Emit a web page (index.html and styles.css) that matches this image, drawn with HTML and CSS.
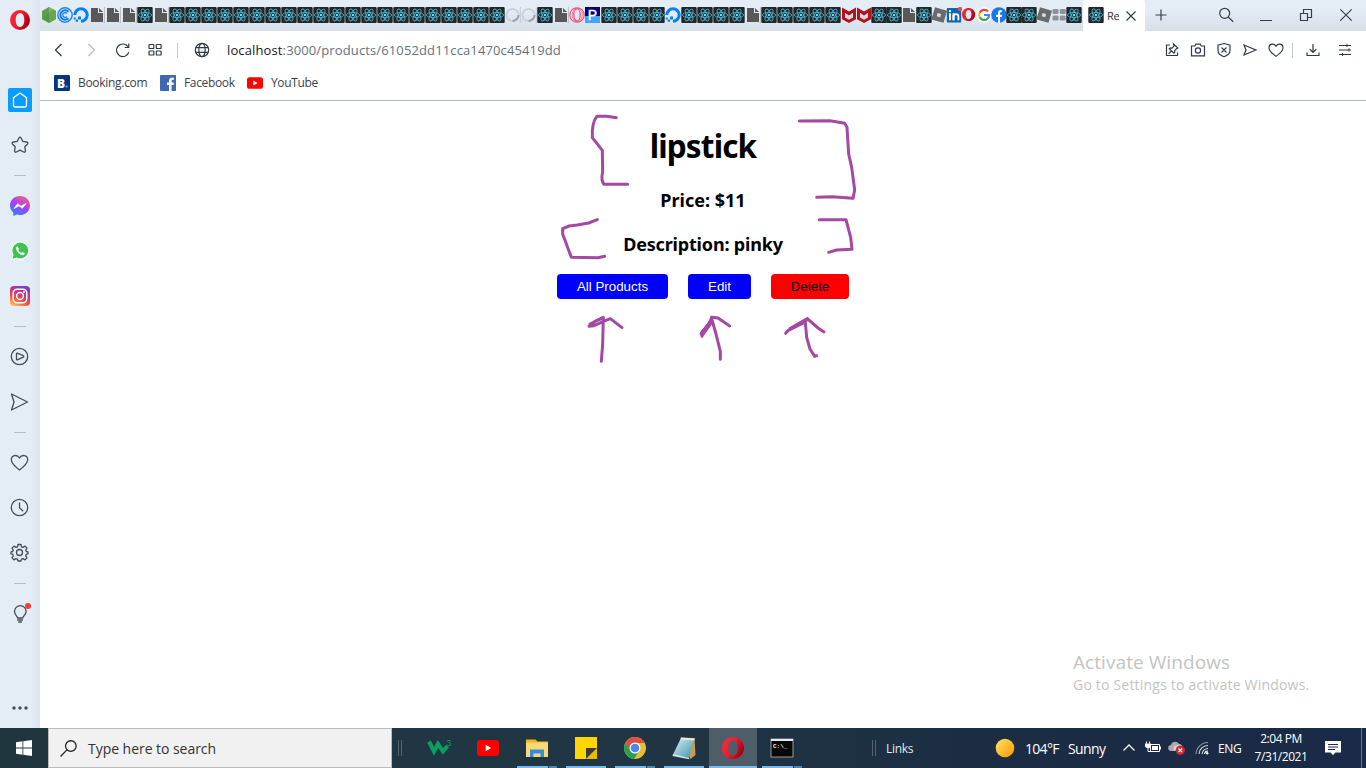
FILE: index.html
```html
<!DOCTYPE html>
<html lang="en">
<head>
<meta charset="utf-8">
<title>React App</title>
<link rel="stylesheet" href="styles.css">
</head>
<body>
<svg class="defs" aria-hidden="true">
  <defs>
    <linearGradient id="gOpera" x1="0" y1="0" x2="1" y2="0.5"><stop offset="0" stop-color="#ff2a3c"/><stop offset="0.55" stop-color="#ee1c2c"/><stop offset="1" stop-color="#a80014"/></linearGradient>
    <linearGradient id="gMsg" x1="0.2" y1="1" x2="0.8" y2="0"><stop offset="0" stop-color="#1f8cff"/><stop offset="0.5" stop-color="#a040ff"/><stop offset="1" stop-color="#ff6070"/></linearGradient>
    <linearGradient id="gInsta" x1="0.2" y1="1" x2="0.7" y2="0"><stop offset="0" stop-color="#fdc04f"/><stop offset="0.35" stop-color="#f0503f"/><stop offset="0.65" stop-color="#c8308a"/><stop offset="1" stop-color="#6a45c8"/></linearGradient>
    <linearGradient id="gSun" x1="0" y1="0" x2="1" y2="1"><stop offset="0" stop-color="#ffe566"/><stop offset="1" stop-color="#ff9500"/></linearGradient>
    <linearGradient id="gNote" x1="0" y1="0" x2="1" y2="1"><stop offset="0" stop-color="#d3eef3"/><stop offset="1" stop-color="#3d94ab"/></linearGradient>
    <symbol id="re" viewBox="0 0 16 16"><rect x="0.3" width="15.4" height="16" rx="1" fill="#20262b"/><g fill="none" stroke="#4badc4" stroke-width="0.9"><ellipse cx="8" cy="8" rx="6.6" ry="2.5"/><ellipse cx="8" cy="8" rx="6.6" ry="2.5" transform="rotate(60 8 8)"/><ellipse cx="8" cy="8" rx="6.6" ry="2.5" transform="rotate(120 8 8)"/></g><circle cx="8" cy="8" r="1.3" fill="#61dafb"/></symbol>
    <symbol id="pg" viewBox="0 0 16 16"><path d="M2 1h7v5h5v9H2z" fill="#585858"/><path d="M10 1l4 4h-4z" fill="#585858"/><path d="M15.4 0v16" stroke="#a9b1b9" stroke-width="0.8"/></symbol>
    <symbol id="nd" viewBox="0 0 16 16"><path d="M8 0l7 4v8l-7 4-7-4V4z" fill="#5d9f4b"/><path d="M8 0l7 4v8l-7 4z" fill="#7fbb62"/><path d="M1 12L12 2l3 2v8l-7 4z" fill="#4e8e43" opacity=".45"/></symbol>
    <symbol id="cc" viewBox="0 0 16 16"><circle cx="8" cy="8" r="7.2" fill="#d8ebff" stroke="#1f82ee" stroke-width="1.4"/><path d="M11.5 4.8a4.7 4.7 0 1 0 0 6.4" fill="none" stroke="#0d7af5" stroke-width="2"/><path d="M10 6.5a2.4 2.4 0 1 0 0 3" fill="none" stroke="#0d7af5" stroke-width="1.2"/></symbol>
    <symbol id="do" viewBox="0 0 16 16"><path d="M1.8 8A6.2 6.2 0 1 1 8 14.2" fill="none" stroke="#0080ff" stroke-width="3"/><path d="M5 9.5h3v3H5zM2.7 12.5H5v2.3H2.7zM.7 10.6h2v2h-2z" fill="#0080ff"/></symbol>
    <symbol id="sp" viewBox="0 0 16 16"><circle cx="7.5" cy="8" r="6" fill="none" stroke="#cbd2da" stroke-width="2"/><path d="M13.5 8a6 6 0 0 1-6 6" fill="none" stroke="#9ba5af" stroke-width="2"/><path d="M15.3 0v16" stroke="#b2bac3" stroke-width="0.7"/></symbol>
    <symbol id="oo" viewBox="0 0 16 16"><g fill="none" stroke="#f3527a" stroke-width="1.2"><circle cx="8" cy="8" r="7.2"/><ellipse cx="8" cy="8" rx="3.2" ry="6"/><ellipse cx="8.3" cy="8" rx="5" ry="6.6" stroke-width=".7"/></g></symbol>
    <symbol id="pp" viewBox="0 0 16 16"><path fill="#00007d" d="M0 0h15v9H0z"/><path fill="#43a3f4" d="M0 9h15v7H0z"/><text x="7.5" y="12.6" text-anchor="middle" font-family="Liberation Sans, Arial, sans-serif" font-size="14" fill="#fff" stroke="#fff" stroke-width=".4">P</text></symbol>
    <symbol id="mc" viewBox="0 0 16 16"><path d="M1 .5l7 4 7-4v11.700L8 15.900l-7-3.700z" fill="#b3121f"/><path d="M4 5.500l4 2.500 4-2.500v5l-4 2.300-4-2.300z" fill="#dcd6da"/><path d="M4 5l4 3 4-3" fill="none" stroke="#8b0f18" stroke-width="1"/></symbol>
    <symbol id="rb" viewBox="0 0 16 16"><path d="M4 .3l12 3.500-3.500 12L.3 12.400z" fill="#696b6e"/><path d="M6.600 6.100l3.500 1-.9 3.200-3.500-1z" fill="#d8dfe7"/></symbol>
    <symbol id="li" viewBox="0 0 16 16"><rect x=".8" y="1" width="14.400" height="14.500" rx="1" fill="#0a69b0"/><g fill="#fff"><path d="M3 6.300h2v7H3zM6.500 6.300h2v7h-2z"/><circle cx="4" cy="4.100" r="1.200"/></g><path d="M7.500 13.300v-3.700c0-3.200 4.900-3.200 4.900 0v3.700" fill="none" stroke="#fff" stroke-width="1.800"/><circle cx="14" cy="2" r="2.200" fill="#ef4b4b"/></symbol>
    <symbol id="op" viewBox="0 0 20 20"><path fill-rule="evenodd" fill="url(#gOpera)" d="M10 0a10 10 0 1 0 0 20 10 10 0 0 0 0-20zm0 3c2.700 0 4.300 3.100 4.300 7s-1.600 7-4.300 7-4.300-3.100-4.300-7S7.300 3 10 3z"/></symbol>
    <symbol id="gg" viewBox="0 0 16 16"><circle cx="8" cy="8" r="7.800" fill="#fff"/><g fill="none" stroke-width="2.200"><path d="M12 4.500A5 5 0 0 0 3.700 5.700" stroke="#ea4335"/><path d="M3.700 5.700a5 5 0 0 0 0 4.600" stroke="#fbbc05"/><path d="M3.700 10.300a5 5 0 0 0 7.600 1.500" stroke="#34a853"/><path d="M11.300 11.800A5 5 0 0 0 13 8H8" stroke="#4285f4"/></g></symbol>
    <symbol id="fb" viewBox="0 0 16 16"><circle cx="8" cy="8" r="7.800" fill="#1877f2"/><path d="M7 16V10H5V7.700h2V6c0-2.200 1.300-3.200 3.800-2.800v2C9.600 5 9 5.300 9 6.400v1.300h2l-.4 2.300H9v6z" fill="#fff"/></symbol>
    <symbol id="gr" viewBox="0 0 16 16"><g fill="#8b9299"><rect x="1.500" y="2" width="6" height="5" rx="1.300"/><rect x="8.700" y="2" width="6" height="5" rx="1.300"/><rect x="1.500" y="8.500" width="6" height="5" rx="1.300"/><rect x="8.700" y="8.500" width="6" height="5" rx="1.300"/></g></symbol>
    <symbol id="yt" viewBox="0 0 24 18"><rect width="24" height="18" rx="4" fill="#f00"/><path d="M9.500 5.500l6 3.500-6 3.500z" fill="#fff"/></symbol>
    <symbol id="heart" viewBox="0 0 20 20"><path d="M10 17.300C4 13 1.200 10.200 1.200 6.500c0-5.200 6.500-6 8.800-1.900 2.300-4.100 8.800-3.300 8.800 1.900 0 3.700-2.800 6.500-8.800 10.800z"/></symbol>
  </defs>
</svg>

<div class="browser">
  <nav class="side">
    <svg class="logo" viewBox="0 0 20 20"><use href="#op"/></svg>
    <div class="home"><svg viewBox="0 0 24 24"><path d="M12 5l6.500 4.700v7.600a1.700 1.700 0 0 1-1.700 1.700H7.200a1.700 1.700 0 0 1-1.700-1.700V9.700z"/></svg></div>
    <svg class="ico" viewBox="0 0 24 24"><path d="M12 4.200c.6 0 .9.400 1.200 1l1.600 3.200 3.800.6c1.300.2 1.700 1.300.8 2.200l-2.600 2.600.6 3.900c.2 1.300-.7 1.900-1.800 1.300L12 17.200 8.400 19c-1.100.6-2 0-1.800-1.300l.6-3.900-2.600-2.600c-.9-.9-.5-2 .8-2.200l3.800-.6 1.600-3.200c.3-.6.600-1 1.200-1z"/></svg>
    <i class="sep"></i>
    <svg viewBox="0 0 24 24"><path d="M12 2C6.300 2 2 6 2 11.500c0 3 1.200 5.300 3.200 7L5.500 22l3.200-1.400c1 .3 2.200.5 3.300.5 5.700 0 10-4.100 10-9.600S17.700 2 12 2z" fill="url(#gMsg)"/><path d="M6 14.500l3.700-4.800 3.300 2.500 5-2.700-3.700 4.800-3.300-2.500z" fill="#fff" stroke="#fff" stroke-width=".8" stroke-linejoin="round"/></svg>
    <svg viewBox="0 0 24 24"><path d="M3 21l1.400-4.800A9 9 0 1 1 8 19.800z" fill="#fff"/><path d="M4.500 19.700l1.100-4A7.900 7.900 0 1 1 8.600 18.500z" fill="#3fc351"/><path d="M9.300 7.500c-1.300.4-1.600 2-.8 3.600 1.100 2.400 2.900 4.100 5.300 4.900 1.600.5 3-.4 3-1.900l-2.300-1.200-1 1.100c-1.500-.5-2.600-1.600-3.200-3l.9-1.100z" fill="#fff"/></svg>
    <svg viewBox="0 0 24 24"><rect x="2" y="2" width="20" height="20" rx="4" fill="url(#gInsta)"/><g fill="none" stroke="#fff" stroke-width="1.500"><rect x="5.200" y="5.200" width="13.600" height="13.600" rx="4"/><circle cx="12" cy="12" r="3.400"/></g><circle cx="16" cy="8" r="1" fill="#fff"/></svg>
    <i class="sep"></i>
    <svg class="ico" viewBox="0 0 24 24"><circle cx="11.500" cy="11.500" r="8.200"/><path d="M8.500 8.700c0-.5.300-.7.800-.6l6 2.600c.7.400.7 1.200 0 1.500l-6 2.600c-.5.200-.8 0-.8-.5z"/></svg>
    <svg class="ico" viewBox="0 0 24 24"><path d="M3.500 4L19.500 12 3.500 20 6 12z"/></svg>
    <i class="sep"></i>
    <svg class="ico" viewBox="0 0 24 24"><path d="M11.500 19C6 14.800 3.300 12 3.300 8.800c0-5 6-5.600 8.200-1.800 2.200-3.800 8.200-3.200 8.200 1.800 0 3.200-2.700 6-8.200 10.200z"/></svg>
    <svg class="ico" viewBox="0 0 24 24"><circle cx="11.500" cy="11.500" r="8.200"/><path d="M11.500 7v4.800l3.200 3"/></svg>
    <svg class="ico" viewBox="0 0 24 24"><circle cx="11.500" cy="11.500" r="3"/><path d="M10 3.500h3l.5 2.300 1.500.6 2-1.300 2 2-1.300 2 .6 1.400 1.700.3v2l-1.700.4-.6 1.700 1.300 2-2 2-2-1.300-1.500.6-.5 1.800h-3l-.5-1.800-1.500-.6-2 1.300-2-2 1.300-2-.6-1.700-1.700-.4v-2l1.700-.3.6-1.400-1.300-2 2-2 2 1.300 1.500-.6z"/></svg>
    <i class="sep"></i>
    <svg class="ico" viewBox="0 0 24 24"><path d="M9.500 16c0-2-3-3.200-3-6.500a5.800 5.800 0 0 1 11.600 0c0 3.300-3.400 4.500-3.400 6.500z"/><path d="M9.700 18h4.800M10.800 20h2.600"/><circle cx="20" cy="4" r="3" fill="#ff3a2f" stroke="none"/></svg>
    <svg class="more" viewBox="0 0 24 24"><g fill="#434e5b"><circle cx="6" cy="12" r="1.700"/><circle cx="12" cy="12" r="1.700"/><circle cx="18" cy="12" r="1.700"/></g></svg>
  </nav>

  <div class="main">
    <header class="strip">
      <div class="tabs wide">
        <svg><use href="#nd"/></svg><svg><use href="#cc"/></svg><svg><use href="#do"/></svg><svg><use href="#pg"/></svg><svg><use href="#pg"/></svg><svg><use href="#pg"/></svg><svg><use href="#re"/></svg><svg><use href="#pg"/></svg>
        <svg><use href="#re"/></svg><svg><use href="#re"/></svg><svg><use href="#re"/></svg><svg><use href="#re"/></svg><svg><use href="#re"/></svg><svg><use href="#re"/></svg><svg><use href="#re"/></svg>
        <svg><use href="#re"/></svg><svg><use href="#re"/></svg><svg><use href="#re"/></svg><svg><use href="#re"/></svg><svg><use href="#re"/></svg><svg><use href="#re"/></svg><svg><use href="#re"/></svg>
        <svg><use href="#re"/></svg><svg><use href="#re"/></svg><svg><use href="#re"/></svg><svg><use href="#re"/></svg><svg><use href="#re"/></svg><svg><use href="#re"/></svg><svg><use href="#re"/></svg>
        <svg><use href="#sp"/></svg><svg><use href="#sp"/></svg><svg><use href="#re"/></svg><svg><use href="#pg"/></svg><svg><use href="#oo"/></svg><svg><use href="#pp"/></svg>
        <svg><use href="#re"/></svg><svg><use href="#re"/></svg><svg><use href="#re"/></svg><svg><use href="#re"/></svg><svg><use href="#do"/></svg><svg><use href="#re"/></svg><svg><use href="#re"/></svg><svg><use href="#re"/></svg><svg><use href="#re"/></svg>
        <svg><use href="#pg"/></svg><svg><use href="#re"/></svg><svg><use href="#re"/></svg><svg><use href="#re"/></svg><svg><use href="#re"/></svg><svg><use href="#re"/></svg>
      </div>
      <div class="tabs tight">
        <svg><use href="#mc"/></svg><svg><use href="#mc"/></svg><svg><use href="#re"/></svg><svg><use href="#re"/></svg><svg><use href="#pg"/></svg><svg><use href="#re"/></svg><svg><use href="#rb"/></svg><svg><use href="#li"/></svg>
        <svg viewBox="-1 -1 18 18"><use href="#op" x="0" y="0" width="15" height="15"/></svg><svg><use href="#gg"/></svg><svg><use href="#fb"/></svg><svg><use href="#re"/></svg><svg><use href="#re"/></svg><svg><use href="#rb"/></svg><svg><use href="#gr"/></svg><svg><use href="#re"/></svg>
      </div>
      <div class="tab">
        <svg class="fav"><use href="#re"/></svg><span class="tabname">Re</span>
        <svg class="x" viewBox="0 0 10 10"><path d="M.5.5l9 9M9.500.500l-9 9"/></svg>
      </div>
      <svg class="plus" viewBox="0 0 12 12"><path d="M6 .5v11M.5 6h11"/></svg>
      <div class="win">
        <svg viewBox="0 0 16 16"><circle cx="6.700" cy="6.300" r="5"/><path d="M10.200 10l5 4.700"/></svg>
        <svg viewBox="0 0 16 16"><path d="M2 13.500h12" shape-rendering="crispEdges"/></svg>
        <svg viewBox="0 0 16 16"><path d="M2.500 6.500h7v7h-7zM5.500 6.500v-4h8v8h-4"/></svg>
        <svg viewBox="0 0 16 16"><path d="M2.300 2.300l11.400 11.400M13.700 2.300L2.300 13.700"/></svg>
      </div>
    </header>

    <div class="toolbar">
      <svg class="t back" viewBox="0 0 16 16"><path d="M10.500 2L4.500 8l6 6"/></svg>
      <svg class="t fwd" viewBox="0 0 16 16"><path d="M5.500 2l6 6-6 6"/></svg>
      <svg class="t reload" viewBox="0 0 16 16"><path d="M13.800 10.300a6.300 6.300 0 1 1-.8-5.600M13.800 1.500v4h-4"/></svg>
      <svg class="t dial" viewBox="0 0 16 16"><g><rect x="2" y="2.500" width="4.800" height="4" rx=".6"/><rect x="9.300" y="2.500" width="4.800" height="4" rx=".6"/><rect x="2" y="9" width="4.800" height="4" rx=".6"/><rect x="9.300" y="9" width="4.800" height="4" rx=".6"/></g></svg>
      <i class="vbar"></i>
      <svg class="t globe" viewBox="0 0 16 16"><circle cx="8" cy="8" r="6.700"/><ellipse cx="8" cy="8" rx="3.200" ry="6.700"/><path d="M1.800 5.700h12.400M1.800 10.300h12.400"/></svg>
      <span class="url"><b>localhost</b>:3000/products/61052dd11cca1470c45419dd</span>
      <div class="actions">
        <svg class="t" viewBox="0 0 16 16"><path d="M6 3H2.500v10.500h11V10.500"/><path d="M9.500 2l4.300 4-1.200.6-2 2 .2 1.700-.9.900L5.300 6.800l1-.9 1.700.2 2-2zM7.500 9L4.600 11.800"/></svg>
        <svg class="t" viewBox="0 0 16 16"><path d="M1.500 4h3.300l1-1.800h4.400l1 1.800h3.300v9.800h-13z"/><circle cx="8" cy="8.500" r="2.600"/></svg>
        <svg class="t" viewBox="0 0 16 16"><path d="M8 1.500l6 1.700V8.500c0 3-2.600 5-6 6.200-3.400-1.200-6-3.200-6-6.200V3.200zM5.500 5.500l5 5M10.500 5.500l-5 5"/></svg>
        <svg class="t" viewBox="0 0 16 16"><path d="M2 3l12 5L2 13l2-5z"/></svg>
        <svg class="t" viewBox="0 0 16 16"><use href="#heart" width="16" height="16" y=".5" stroke-width="1.400"/></svg>
        <i class="vbar"></i>
        <svg class="t" viewBox="0 0 16 16"><path d="M8 2v8.500M4.700 7.300L8 10.500l3.300-3.200M2 10.500v3h12v-3"/></svg>
        <svg class="t" viewBox="0 0 16 16"><path d="M2 3.500h12M2 8h12M2 12.500h12M10 2v3M12 6.500v3M5.500 11v3" stroke-width="1.100"/></svg>
      </div>
    </div>

    <div class="marks">
      <svg viewBox="0 0 16 16"><rect width="16" height="16" rx="1.200" fill="#003580"/><text x="3" y="12.500" font-family="Open Sans, sans-serif" font-weight="800" font-size="12" fill="#fff">B</text><circle cx="12.600" cy="11.500" r="1.200" fill="#25a5e8"/></svg><span class="m1">Booking.com</span>
      <svg viewBox="0 0 16 16"><rect width="16" height="16" rx=".8" fill="#4267b2"/><path d="M9 16V10H7V7.500h2V6c0-2.500 1.500-3.700 4.800-3.300v2.200c-1.800-.1-2.300.2-2.300 1.500v1.100h2.300L13.500 10h-2v6z" fill="#fff"/></svg><span class="m2">Facebook</span>
      <svg viewBox="0 0 16 16"><rect x="0" y="2.300" width="16" height="11.500" rx="2.600" fill="#f00"/><path d="M6.300 5.600l4.400 2.500-4.400 2.500z" fill="#fff"/></svg><span class="m3">YouTube</span>
    </div>

    <main class="page">
      <h1>lipstick</h1>
      <h3 class="price">Price: $11</h3>
      <h3 class="desc">Description: pinky</h3>
      <div class="buttons"><button class="blue all">All Products</button><button class="blue edit">Edit</button><button class="red">Delete</button></div>
      <svg class="ink" viewBox="0 0 990 810">
        <path d="M229 41L200 37 171 37Q155 55 157 101L187 139 188 204Q182 228 192 241L263 241"/>
        <path d="M778 51L870 50 914 58 921 70 926 150 935 190 944 258 939 283 876 278 830 280"/>
        <path d="M172 347L146 357 112 363 87 366 68 374 68 390 94 460 174 461 194 457"/>
        <path d="M838 347L918 347 932 400 936 436 890 438 866 445"/>
        <path d="M184 772L188 720 190 642Q162 650 147 667L162 665 196 650 211 644 246 671M150 660L190 640"/>
        <path d="M541 766L541 742 528 690 514 640M486 697L486 684 504 664 516 640 534 642 569 666"/>
        <path d="M486 690L512 655" stroke-width="14"/>
        <path d="M737 688L745 679 796 654 802 644 834 672 852 684M750 674L802 644M796 656L800 700 810 735 824 757 830 755"/>
      </svg>
      <div class="activate"><p class="a1">Activate Windows</p><p class="a2">Go to Settings to activate Windows.</p></div>
    </main>
  </div>
</div>

<footer class="taskbar">
  <div class="start"><svg viewBox="0 0 16 16"><path fill="#fff" d="M0 2.200l6.500-.9v6.300H0zM7.300 1.200L16 0v7.600H7.300zM0 8.400h6.500v6.300L0 13.800zM7.300 8.400H16V16l-8.700-1.200z"/></svg></div>
  <div class="search"><svg viewBox="0 0 16 16"><circle cx="10.200" cy="5.700" r="5"/><path d="M6.500 9.300L.5 15.500"/></svg><span>Type here to search</span></div>
  <i class="grip g1"></i>
  <div class="apps">
    <div class="app"><svg viewBox="0 0 28 28"><path d="M4 7.500L9 17.500 13 10 18 17.500 22.500 12" fill="none" stroke="#089f63" stroke-width="4"/><text x="21.500" y="11.500" font-family="Liberation Sans, Arial, sans-serif" font-size="8.500" fill="#089f63">3</text></svg></div>
    <div class="app"><svg viewBox="0 0 28 28"><use href="#yt" x="3" y="5.800" width="22" height="16.500"/></svg></div>
    <div class="app open multi"><svg viewBox="0 0 28 28"><path d="M3 5.500h9.500l2 2H25V22H3z" fill="#f2b51c"/><path d="M3 8.500h22V23H3z" fill="#fcd874"/><path d="M7 23v-7.500h14V23h-3.500v-3.500h-7V23z" fill="#3090df"/></svg></div>
    <div class="app open"><svg viewBox="0 0 28 28"><path d="M3 3h22v11l-11 11H3z" fill="#ffd602"/><path d="M14 14h11L14 25z" fill="#3b3a39"/><path d="M25 14v11H14z" fill="#e8bd00"/></svg></div>
    <div class="app open multi"><svg viewBox="0 0 28 28"><circle cx="14" cy="14" r="11" fill="#e8be32"/><path d="M4.500 8.500A11 11 0 0 0 13 25l5.500-8.500-9 0z" fill="#2a9e54"/><path d="M4.500 8.500A11 11 0 0 1 23.700 9H14v5l-5 2z" fill="#dd5144"/><circle cx="14" cy="14" r="5.500" fill="#fff"/><circle cx="14" cy="14" r="4.300" fill="#4a88ee"/></svg></div>
    <div class="app open"><svg viewBox="0 0 28 28"><path d="M10.500 3.500l14 .5 1 17-5 4z" fill="#c89b50"/><path d="M10.500 5l13 .8L19 24.500 3 20.500z" fill="url(#gNote)"/><path d="M3 20l16 4 .3 1.300L2.500 22z" fill="#dfe6e8"/><path d="M11 3.500l14 1-.7 2-14-1z" fill="#e8e8e4"/></svg></div>
    <div class="app open active"><svg viewBox="0 0 28 28"><use href="#op" x="2.500" y="3" width="23" height="22"/></svg></div>
    <div class="app open multi"><svg viewBox="0 0 28 28"><rect x="3" y="5" width="22" height="18" fill="#080808" stroke="#999" stroke-width="1"/><path d="M3 6h22" stroke="#e8e8e8" stroke-width="2"/><text x="5" y="14" font-family="Liberation Mono, monospace" font-weight="bold" font-size="6" fill="#eee">C:\_</text></svg></div>
  </div>
  <i class="grip g2"></i>
  <span class="links">Links</span>
  <div class="weather"><svg viewBox="0 0 20 20"><circle cx="10" cy="10" r="9.300" fill="url(#gSun)"/></svg><span class="deg">104°F</span><span class="sunny">Sunny</span></div>
  <div class="tray">
    <svg class="chev" viewBox="0 0 16 16"><path d="M2.500 10.500L8 5l5.500 5.500"/></svg>
    <svg viewBox="0 0 16 16"><path d="M5.500 4.500h9v7h-9z" fill="none" stroke="#fff"/><path d="M7 6h6v4H7zM14.500 6.500H16v3h-1.500zM0 3.500h6v3L4.500 8h-3L0 6.500z" fill="#fff"/><path d="M1.500 3.500V1.500M4.500 3.500V1.500M3 8v3.500h3" stroke="#fff" fill="none"/></svg>
    <svg class="cloud" viewBox="0 0 18 16"><path d="M3.500 11a3 3 0 0 1-.5-6C3.700 1.500 9 .5 11 4c4 0 4 7 0 7z" fill="#a9abae"/><path d="M7 11a3 3 0 0 1 2-5.500 4 4 0 0 1 5 0V11z" fill="#d8d9db"/><circle cx="12.300" cy="10.300" r="4.700" fill="#d92332"/><path d="M10.500 8.500l3.600 3.600M14.100 8.500l-3.600 3.600" stroke="#fff" stroke-width="1.300"/></svg>
    <svg class="wifi" viewBox="0 0 16 16"><g fill="none" stroke-width="1.100"><path d="M2 14A12 12 0 0 1 14 2.500" stroke="#8c949f"/><path d="M5 14a9 9 0 0 1 9-8.500M8 14a6 6 0 0 1 6-5.500" stroke="#dfe2e7"/><path d="M10.500 14a3.500 3.500 0 0 1 3.500-3" stroke="#fff"/></g><circle cx="13.200" cy="13.300" r="1.200" fill="#fff"/></svg>
    <span class="lang">ENG</span>
  </div>
  <div class="clock"><span class="c1">2:04 PM</span><span class="c2">7/31/2021</span></div>
  <svg class="note" viewBox="0 0 16 16"><path d="M0 1h16v11.500h-5.500L8 15l-2.500-2.500H0z" fill="#fff"/><path d="M3 4.500h10M3 7h10M3 9.500h7" stroke="#1c2c42"/></svg>
  <i class="peek"></i>
</footer>
</body>
</html>
```
FILE: styles.css
```css
* { box-sizing: border-box; }
body { margin: 0; width: 1366px; height: 768px; overflow: hidden; background: #fff; font-family: "Open Sans", "Noto Sans", sans-serif; }
svg { display: block; flex: none; }
.defs { position: absolute; width: 0; height: 0; }
.browser { display: flex; height: 728px; }
span, p, h1, h3 { white-space: nowrap; }

.side { width: 40px; background: linear-gradient(90deg, #e4edf5 75%, #dce5ee); display: flex; flex-direction: column; align-items: center; gap: 21px; padding-top: 10px; }
.side svg { width: 24px; height: 24px; }
.side .logo { width: 20px; height: 20px; margin-bottom: 37px; }
.home { width: 24px; height: 24px; border-radius: 2px; background: #0a9bff; }
.home svg { fill: none; stroke: #fff; stroke-width: 1.3; }
.ico { fill: none; stroke: #434e5b; stroke-width: 1.3; stroke-linejoin: round; stroke-linecap: round; }
.sep { width: 12px; height: 1px; flex: none; background: #aebfce; margin: -3px 0; }
.side .more { margin-top: 49px; }

.main { width: 1326px; display: flex; flex-direction: column; }
.strip { height: 31px; background: linear-gradient(#e4edf5 30%, #d7dfe8); display: flex; align-items: center; padding-left: 1px; }
.tabs { display: flex; height: 16px; margin-top: -1px; }
.tabs svg { width: 16px; height: 16px; }
.tight svg { margin-right: -1px; }
.tight { width: 240px; }
.tab { width: 62px; height: 31px; background: #fff; border-radius: 2px 2px 0 0; margin-left: 2px; display: flex; align-items: center; padding-left: 5px; }
.fav { width: 16px; height: 16px; margin-top: -1px; }
.tabname { font-size: 11px; width: 12px; margin-left: 3px; overflow: hidden; letter-spacing: -0.4px; color: #333; }
.x { width: 10px; height: 10px; margin-left: 7px; }
.x, .plus, .win svg { fill: none; stroke: #353f49; stroke-width: 1.2; }
.plus { width: 12px; height: 12px; margin: -2px 0 0 10px; }
.win { display: flex; gap: 24px; margin: -1px 0 0 51px; }
.win svg { width: 16px; height: 16px; }

.toolbar { height: 38px; display: flex; align-items: center; padding-left: 11px; }
.t { width: 16px; height: 16px; fill: none; stroke: #303b47; stroke-width: 1.2; }
.back { stroke-width: 1.3; }
.fwd { margin-left: 16px; stroke: #b7bcc1; }
.reload { margin-left: 16px; }
.dial { margin-left: 16px; }
.vbar { width: 1px; height: 15px; background: #c5c9cd; }
.toolbar > .vbar { margin-left: 14px; }
.globe { margin-left: 16px; }
.url { margin-left: 17px; font-size: 13px; letter-spacing: 0.125px; color: #66727f; width: 360px; }
.url b { font-weight: 400; color: #16191c; }
.actions { display: flex; align-items: center; gap: 10px; margin-left: 577px; }
.actions .vbar { margin-right: 2px; margin-left: -2px; }
.actions svg:last-child { margin-left: 6px; }

.marks { height: 32px; flex: none; border-bottom: 1px solid #adbfcd; display: flex; align-items: center; padding: 0 0 4px 14px; font-size: 12px; color: #3d4349; }
.marks svg { width: 16px; height: 16px; }
.marks span { margin-left: 8px; letter-spacing: -0.35px; }
.marks .m1 { width: 82px; letter-spacing: -0.3px; }
.marks .m2 { width: 63px; }

.page { flex: 1; position: relative; text-align: center; font-family: "Noto Sans", "Open Sans", sans-serif; color: #000; overflow: hidden; }
h1 { margin: 23px 0 0; font-size: 31.5px; letter-spacing: -0.85px; line-height: 43px; }
h3 { margin: 21px 0 0; font-size: 18px; line-height: 25px; }
h3 + h3 { margin-top: 19px; letter-spacing: -0.18px; }
.buttons { display: flex; justify-content: center; gap: 20px; margin-top: 17px; }
button { height: 25px; border: 0; border-radius: 4px; padding: 0 0 1px; font: 13.33px "Liberation Sans", Arial, sans-serif; }
.all { width: 111px; }
.edit { width: 63px; }
.blue { background: #00f; color: #fff; }
.red { width: 78px; background: #f00; color: #000; }
.ink { position: absolute; left: 500px; top: 3px; width: 330px; height: 270px; fill: none; stroke: #a349a4; stroke-width: 9; stroke-linecap: round; stroke-linejoin: round; }
.activate { position: absolute; left: 1033px; top: 547px; text-align: left; color: #c3c3c3; font-family: "Open Sans", sans-serif; }
.activate p { margin: 0; }
.a1 { font-size: 19px; line-height: 28px; letter-spacing: 0.07px; }
.a2 { font-size: 14px; line-height: 18px; letter-spacing: 0.2px; }

.taskbar { height: 40px; display: flex; align-items: center; background: linear-gradient(90deg, #20363f, #213644 45%, #1b2c43 75%, #1a2a48); color: #fff; }
.start { width: 48px; display: flex; justify-content: center; }
.start svg { width: 16px; height: 16px; }
.search { width: 344px; height: 40px; background: #f1f1f1; border: 1px solid #bbb; display: flex; align-items: center; padding-left: 11px; color: #333; font-size: 14px; }
.search svg { width: 17px; height: 17px; fill: none; stroke: #222; stroke-width: 1.2; }
.search span { margin-left: 11px; letter-spacing: -0.04px; }
.grip { width: 4px; height: 16px; border: solid #53656f; border-width: 0 1px; }
.g1 { margin-left: 6px; }
.apps { display: flex; gap: 1px; height: 40px; margin-left: 13px; }
.app { width: 48px; height: 40px; padding: 6px 10px 0; background: linear-gradient(#76b9ed, #76b9ed) no-repeat center bottom / 0 2px; }
.app svg { width: 28px; height: 28px; }
.open { background-size: 40px 2px; }
.multi { background: linear-gradient(90deg, #76b9ed 31px, #203542 31px, #203542 32px, #5288b0 32px) no-repeat center bottom / 40px 2px; }
.active { background-color: #4d5e69; background-size: 48px 2px; }
.g2 { margin-left: 66px; }
.links { margin-left: 10px; font-size: 12px; width: 109px; color: #e4e8ec; letter-spacing: -0.3px; }
.weather { display: flex; align-items: center; font-size: 14px; }
.weather svg { width: 20px; height: 20px; }
.deg { margin-left: 10px; width: 43px; letter-spacing: -0.7px; }
.sunny { width: 53px; letter-spacing: -0.6px; }
.tray { display: flex; align-items: center; font-size: 12px; }
.tray svg { width: 16px; height: 16px; }
.chev { fill: none; stroke: #fff; stroke-width: 1.3; }
.tray .chev { margin-right: 8px; }
.tray .cloud { width: 18px; margin-left: 7px; }
.tray .wifi { margin-left: 8px; }
.lang { margin-left: 8px; width: 26px; letter-spacing: -0.3px; }
.clock { display: flex; flex-direction: column; align-items: center; width: 56px; margin-left: 9px; font-size: 12px; line-height: 18px; letter-spacing: -0.45px; }
.clock .c2 { letter-spacing: -0.45px; }
.note { width: 16px; height: 16px; margin-left: 16px; }
.peek { width: 1px; height: 40px; background: #6a7688; margin-left: 20px; }
```
